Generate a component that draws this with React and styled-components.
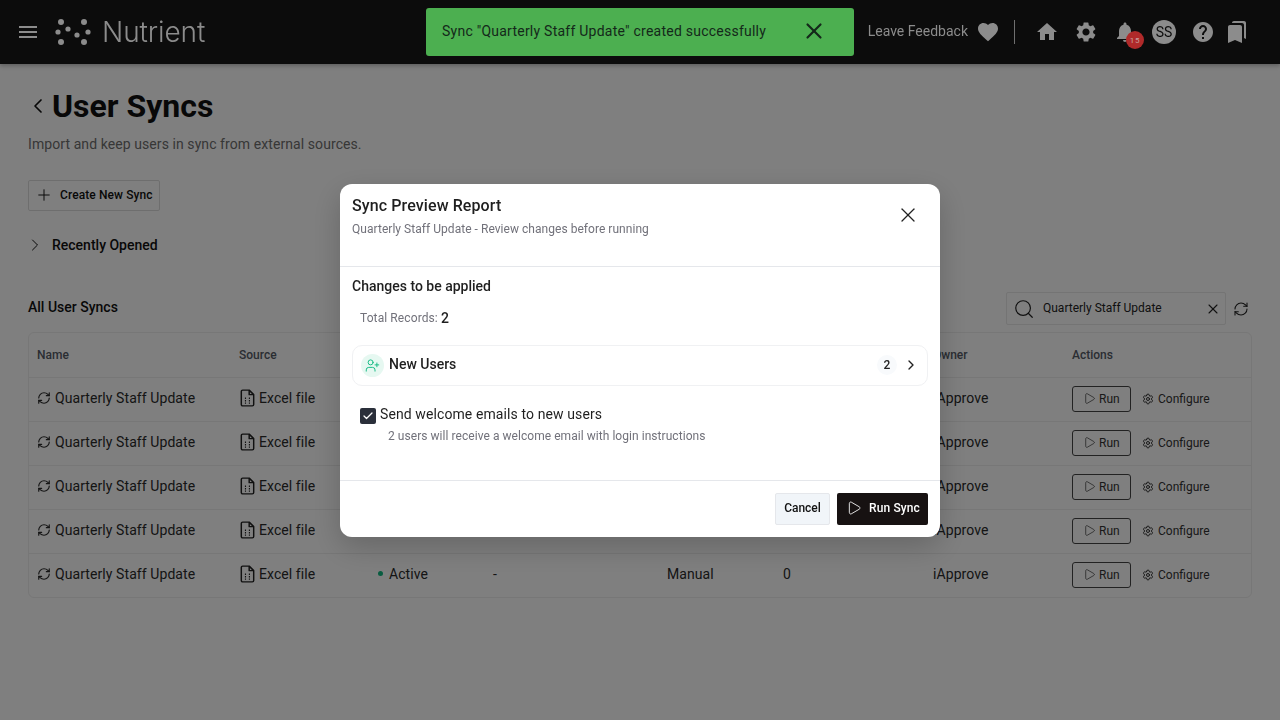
import React from 'react';
import styled, { createGlobalStyle } from 'styled-components';
import {
  Check,
  ChevronLeft,
  ChevronRight,
  Play,
  Plus,
  RefreshCw,
  Search,
  Settings,
  UserPlus,
  X,
} from 'lucide-react';
import {
  MdBookmarks,
  MdFavorite,
  MdHelp,
  MdHome,
  MdMenu,
  MdNotifications,
  MdSettings,
} from 'react-icons/md';

const GlobalStyle = createGlobalStyle`
  * { box-sizing: border-box; }
  html, body {
    margin: 0;
    height: 100%;
    overflow: hidden;
    background: #fff;
    font-family: Roboto, "Liberation Sans", sans-serif;
    color: #111;
  }
`;

// the bar sits above the backdrop, so its colours are the dimmed ones
const TopBar = styled.header`
  position: relative;
  z-index: 2;
  height: 64px;
  background: #0c0c0c;
  display: flex;
  align-items: center;
  justify-content: space-between;
  padding: 0 31px 0 16px;
  color: #8c8c8c;
  box-shadow: 0 2px 4px rgba(0, 0, 0, 0.25);
`;

const Brand = styled.div`
  display: flex;
  align-items: center;
  gap: 15px;
`;

const LogoLockup = styled.div`
  display: flex;
  align-items: center;
  gap: 11px;
`;

const LogoText = styled.span`
  font-family: Inter, sans-serif;
  font-weight: 300;
  font-size: 28px;
  letter-spacing: -0.1px;
  color: #8c8c8c;
`;

const BarActions = styled.div`
  display: flex;
  align-items: center;
`;

const Feedback = styled.span`
  font-size: 14px;
  margin-right: 8px;
  padding-bottom: 2px;
`;

const Divider = styled.span`
  width: 1px;
  height: 24px;
  background: #6f6f6f;
  margin: 0 20px 0 14px;
`;

const IconRow = styled.div`
  display: flex;
  align-items: center;
  gap: 15px;

  & > :last-child {
    margin-left: -5px;
  }
`;

const BellWrap = styled.div`
  position: relative;
  display: flex;
`;

const Badge = styled.span`
  position: absolute;
  left: 13px;
  top: 11px;
  width: 18px;
  height: 18px;
  border-radius: 50%;
  background: #b02a2a;
  color: #c9a0a0;
  font-size: 8px;
  letter-spacing: 0.7px;
  display: flex;
  align-items: center;
  justify-content: center;
`;

const Avatar = styled.span`
  width: 24px;
  height: 24px;
  border-radius: 50%;
  background: #8c8c8c;
  color: #0c0c0c;
  font-size: 14px;
  display: flex;
  align-items: center;
  justify-content: center;
`;

const Main = styled.main`
  padding: 22px 28px 0;
`;

const TitleRow = styled.div`
  display: flex;
  align-items: center;
  gap: 2px;
  height: 40px;
  margin-left: -2px;
`;

const Title = styled.h1`
  margin: 0;
  font-size: 32px;
  font-weight: 700;
  color: #111;
`;

const Subtitle = styled.p`
  margin: 8px 0 0;
  font-size: 14px;
  line-height: 20px;
  letter-spacing: 0.08px;
  color: #6e6e6e;
`;

const OutlineButton = styled.button`
  display: flex;
  align-items: center;
  gap: 7px;
  height: 31px;
  margin-top: 26px;
  padding: 0 6px 1px 6px;
  background: transparent;
  border: 1px solid #ddd;
  border-radius: 2px;
  font: 500 12px Roboto, sans-serif;
  letter-spacing: 0.1px;
  color: #111;
`;

const RecentRow = styled.div`
  display: flex;
  align-items: center;
  gap: 7px;
  margin: 24px 0 0 -3px;
  height: 20px;
  font-size: 14px;
  font-weight: 500;
`;

const SectionRow = styled.div`
  display: flex;
  align-items: center;
  justify-content: space-between;
  margin-top: 37px;
`;

const SectionTitle = styled.h2`
  margin: 0;
  padding-bottom: 3px;
  font-size: 14px;
  font-weight: 500;
  color: #111;
`;

const SearchGroup = styled.div`
  display: flex;
  align-items: center;
  gap: 7px;
  margin-right: 3px;
`;

const SearchBox = styled.div`
  display: flex;
  align-items: center;
  width: 220px;
  height: 33px;
  padding: 0 4px 0 6px;
  border: 1px solid #e8e8e8;
  border-radius: 2px;
  gap: 8px;
`;

const SearchValue = styled.span`
  flex: 1;
  font-size: 12px;
  color: #222;
  padding-bottom: 1px;
`;

const Table = styled.div`
  margin-top: 7px;
  border: 1px solid #eee;
  border-radius: 6px;
`;

const Row = styled.div`
  display: grid;
  grid-template-columns: 202px 139px 115px 174px 116px 150px 139px 1fr;
  align-items: center;
  height: 44px;
  padding-left: 8px;
  border-top: ${(p) => (p.$head ? 'none' : '1px solid #eee')};
`;

const HeadCell = styled.div`
  font-size: 12px;
  font-weight: 500;
  color: #555b66;
`;

const Cell = styled.div`
  display: flex;
  align-items: center;
  gap: ${(p) => p.$gap || 0}px;
  padding-bottom: 4px;
  font-size: 14px;
  letter-spacing: 0.08px;
  color: #2a2a2a;
`;

const ActionCell = styled.div`
  display: flex;
  align-items: center;
  padding-bottom: 2px;
`;

const StatusDot = styled.span`
  width: 5px;
  height: 5px;
  border-radius: 50%;
  background: #10b981;
  margin-right: 6px;
`;

const RunButton = styled.button`
  display: flex;
  align-items: center;
  gap: 3px;
  width: 59px;
  height: 26px;
  padding: 0 0 0 10px;
  background: transparent;
  border: 1px solid #444;
  border-radius: 3px;
  font: 400 12px Roboto, sans-serif;
  color: #333;
`;

const ConfigureLink = styled.span`
  display: flex;
  align-items: center;
  gap: 4px;
  margin-left: 11px;
  font-size: 12px;
  color: #333;
`;

const Backdrop = styled.div`
  position: fixed;
  inset: 0;
  background: rgba(0, 0, 0, 0.5);
  display: flex;
  align-items: center;
  justify-content: center;
`;

const Toast = styled.div`
  position: fixed;
  z-index: 3;
  top: 8px;
  left: 426px;
  width: 428px;
  height: 48px;
  display: flex;
  align-items: center;
  justify-content: space-between;
  padding: 0 27px 2px 16px;
  background: #4caf50;
  border-radius: 3px;
  font-size: 14px;
  letter-spacing: 0.24px;
  color: #14281a;
`;

const Modal = styled.div`
  width: 600px;
  height: 353px;
  background: #fff;
  border-radius: 12px;
  display: flex;
  flex-direction: column;
  box-shadow: 0 10px 30px rgba(0, 0, 0, 0.2);
`;

const ModalHead = styled.div`
  position: relative;
  height: 83px;
  padding: 12px 12px 0;
  border-bottom: 1px solid #e5e7eb;
`;

const ModalTitle = styled.h3`
  margin: 0;
  font-size: 16px;
  line-height: 20px;
  font-weight: 500;
  letter-spacing: 0.1px;
  color: #1f1f1f;
`;

const ModalSub = styled.p`
  margin: 5px 0 0;
  font-size: 12px;
  line-height: 16px;
  letter-spacing: 0.04px;
  color: #71717a;
`;

const CloseButton = styled.span`
  position: absolute;
  right: 20px;
  top: 19px;
  display: flex;
  color: #222;
`;

const ModalBody = styled.div`
  flex: 1;
  padding: 9px 12px 0;
`;

const BodyHeading = styled.h4`
  margin: 0;
  font-size: 14px;
  line-height: 20px;
  font-weight: 500;
  color: #1f1f1f;
`;

const TotalRow = styled.div`
  display: flex;
  align-items: center;
  gap: 3px;
  margin-top: 12px;
  padding-left: 8px;
  height: 20px;
`;

const TotalLabel = styled.span`
  font-size: 12px;
  letter-spacing: 0.1px;
  color: #71717a;
`;

const TotalValue = styled.span`
  font-size: 14px;
  font-weight: 500;
  color: #1f1f1f;
`;

const ChangeCard = styled.div`
  display: flex;
  align-items: center;
  height: 41px;
  margin-top: 17px;
  padding: 0 8px 0 8px;
  border: 1px solid #f0f1f3;
  border-radius: 10px;
`;

const ChangeIcon = styled.span`
  width: 23px;
  height: 23px;
  border-radius: 50%;
  background: #e6f8f1;
  color: #10b981;
  display: flex;
  align-items: center;
  justify-content: center;
  margin-right: 5px;
`;

const ChangeLabel = styled.span`
  flex: 1;
  font-size: 14px;
  font-weight: 500;
  color: #1f1f1f;
  padding-bottom: 3px;
`;

const CountPill = styled.span`
  width: 20px;
  height: 20px;
  border-radius: 50%;
  background: #f8fafc;
  font-size: 12px;
  font-weight: 500;
  color: #222;
  display: flex;
  align-items: center;
  justify-content: center;
  margin-right: 6px;
`;

const CheckRow = styled.label`
  display: flex;
  align-items: flex-start;
  gap: 4px;
  margin-top: 19px;
  padding-left: 8px;
  font-size: 14px;
  line-height: 18px;
  letter-spacing: 0.1px;
  color: #1f1f1f;
`;

const CheckBox = styled.span`
  width: 16px;
  height: 16px;
  margin-top: 3px;
  border-radius: 2px;
  background: #2a2f3a;
  color: #fff;
  display: flex;
  align-items: center;
  justify-content: center;
`;

const CheckHint = styled.p`
  margin: 4px 0 0 36px;
  font-size: 12px;
  line-height: 16px;
  letter-spacing: 0.05px;
  color: #71717a;
`;

const ModalFoot = styled.div`
  height: 57px;
  padding: 12px 12px 0;
  display: flex;
  justify-content: flex-end;
  gap: 7px;
  border-top: 1px solid #e5e7eb;
`;

const CancelButton = styled.button`
  width: 55px;
  height: 32px;
  padding: 0 0 2px;
  background: #f1f5f9;
  border: 1px solid #e5e7eb;
  border-radius: 2px;
  font: 500 12px Roboto, sans-serif;
  color: #111;
`;

const RunSyncButton = styled.button`
  display: flex;
  align-items: center;
  justify-content: center;
  gap: 7px;
  width: 91px;
  height: 32px;
  padding: 0 0 1px 1px;
  background: #171212;
  border: none;
  border-radius: 2px;
  font: 500 12px Roboto, sans-serif;
  letter-spacing: 0.1px;
  color: #fff;
`;

const LogoMark = () => (
  <svg width="36" height="30" viewBox="0 0 36 30" fill="#8c8c8c">
    <circle cx="6" cy="5" r="3" />
    <circle cx="29" cy="5" r="3" />
    <circle cx="3" cy="15" r="2.6" />
    <circle cx="13" cy="12" r="2.6" />
    <circle cx="22" cy="18" r="2.6" />
    <circle cx="33" cy="15" r="2.6" />
    <circle cx="6" cy="25" r="3" />
    <circle cx="29" cy="25" r="3" />
  </svg>
);

const SheetIcon = () => (
  <svg width="17" height="18" viewBox="0 0 15 16" fill="none" stroke="#222" strokeWidth="1.3" strokeLinejoin="round">
    <path d="M2 2.2c0-.7.5-1.2 1.2-1.2H9l4 4v8.8c0 .7-.5 1.2-1.2 1.2H3.2c-.7 0-1.2-.5-1.2-1.2z" />
    <path d="M9 1v4h4" />
    <path d="M5.2 8.2h1M8.7 8.2h1M5.2 10.4h1M8.7 10.4h1M5.2 12.6h1M8.7 12.6h1" strokeWidth="1.2" />
  </svg>
);

const rows = [0, 1, 2, 3, 4];

export default function App() {
  return (
    <>
      <GlobalStyle />
      <TopBar>
        <Brand>
          <MdMenu size={24} />
          <LogoLockup>
            <LogoMark />
            <LogoText>Nutrient</LogoText>
          </LogoLockup>
        </Brand>
        <BarActions>
          <Feedback>Leave Feedback</Feedback>
          <MdFavorite size={24} />
          <Divider />
          <IconRow>
            <MdHome size={24} />
            <MdSettings size={24} />
            <BellWrap>
              <MdNotifications size={24} />
              <Badge>15</Badge>
            </BellWrap>
            <Avatar>SS</Avatar>
            <MdHelp size={24} />
            <MdBookmarks size={24} />
          </IconRow>
        </BarActions>
      </TopBar>

      <Main>
        <TitleRow>
          <ChevronLeft size={24} strokeWidth={1.7} color="#111" />
          <Title>User Syncs</Title>
        </TitleRow>
        <Subtitle>Import and keep users in sync from external sources.</Subtitle>
        <OutlineButton>
          <Plus size={18} strokeWidth={1.3} />
          Create New Sync
        </OutlineButton>
        <RecentRow>
          <ChevronRight size={20} strokeWidth={1.2} />
          Recently Opened
        </RecentRow>

        <SectionRow>
          <SectionTitle>All User Syncs</SectionTitle>
          <SearchGroup>
            <SearchBox>
              <Search size={22} strokeWidth={1.3} color="#222" />
              <SearchValue>Quarterly Staff Update</SearchValue>
              <X size={16} strokeWidth={1.6} color="#222" />
            </SearchBox>
            <RefreshCw size={16} strokeWidth={1.6} color="#222" />
          </SearchGroup>
        </SectionRow>

        <Table>
          <Row $head>
            <HeadCell>Name</HeadCell>
            <HeadCell>Source</HeadCell>
            <HeadCell>Status</HeadCell>
            <HeadCell>Last Run</HeadCell>
            <HeadCell>Schedule</HeadCell>
            <HeadCell>Users</HeadCell>
            <HeadCell>Owner</HeadCell>
            <HeadCell>Actions</HeadCell>
          </Row>
          {rows.map((r) => (
            <Row key={r}>
              <Cell $gap={4}>
                <RefreshCw size={14} />
                Quarterly Staff Update
              </Cell>
              <Cell $gap={3}>
                <SheetIcon />
                Excel file
              </Cell>
              <Cell>
                <StatusDot />
                Active
              </Cell>
              <Cell>-</Cell>
              <Cell>Manual</Cell>
              <Cell>0</Cell>
              <Cell>iApprove</Cell>
              <ActionCell>
                <RunButton>
                  <Play size={13} strokeWidth={1.3} />
                  Run
                </RunButton>
                <ConfigureLink>
                  <Settings size={12} />
                  Configure
                </ConfigureLink>
              </ActionCell>
            </Row>
          ))}
        </Table>
      </Main>

      <Backdrop>
        <Modal>
          <ModalHead>
            <ModalTitle>Sync Preview Report</ModalTitle>
            <ModalSub>Quarterly Staff Update - Review changes before running</ModalSub>
            <CloseButton>
              <X size={24} strokeWidth={1.3} />
            </CloseButton>
          </ModalHead>
          <ModalBody>
            <BodyHeading>Changes to be applied</BodyHeading>
            <TotalRow>
              <TotalLabel>Total Records:</TotalLabel>
              <TotalValue>2</TotalValue>
            </TotalRow>
            <ChangeCard>
              <ChangeIcon>
                <UserPlus size={15} strokeWidth={1.5} />
              </ChangeIcon>
              <ChangeLabel>New Users</ChangeLabel>
              <CountPill>2</CountPill>
              <ChevronRight size={16} color="#222" />
            </ChangeCard>
            <CheckRow>
              <CheckBox>
                <Check size={12} strokeWidth={2.5} />
              </CheckBox>
              Send welcome emails to new users
            </CheckRow>
            <CheckHint>2 users will receive a welcome email with login instructions</CheckHint>
          </ModalBody>
          <ModalFoot>
            <CancelButton>Cancel</CancelButton>
            <RunSyncButton>
              <Play size={16} strokeWidth={1.3} />
              Run Sync
            </RunSyncButton>
          </ModalFoot>
        </Modal>
      </Backdrop>

      <Toast>
        Sync "Quarterly Staff Update" created successfully
        <X size={26} strokeWidth={2} />
      </Toast>
    </>
  );
}
